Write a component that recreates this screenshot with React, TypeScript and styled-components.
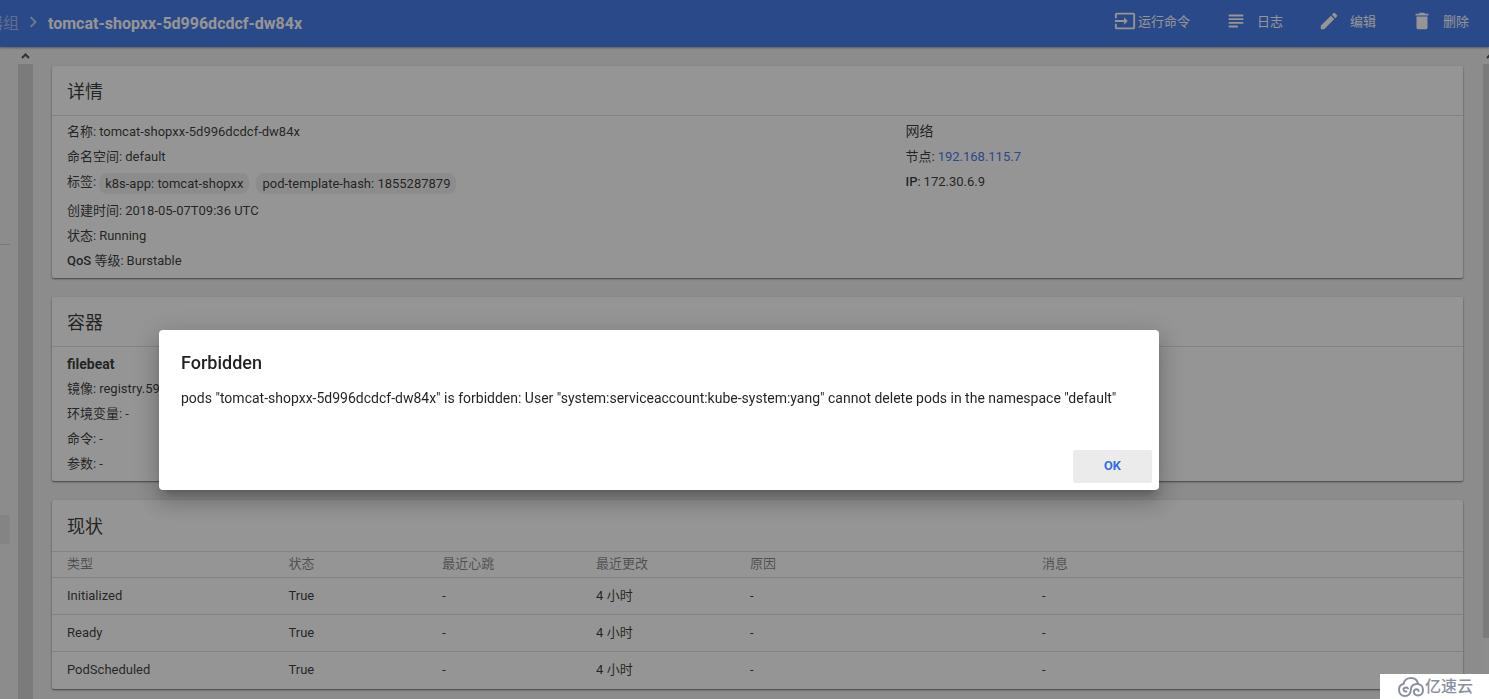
import React from "react";
import styled, { createGlobalStyle } from "styled-components";
import { MdInput, MdSubject, MdEdit, MdDelete } from "react-icons/md";

const GlobalStyle = createGlobalStyle`
  * { box-sizing: border-box; }
  body {
    margin: 0;
    background: #eee;
    color: rgba(0, 0, 0, 0.87);
    font: 13px/25px Roboto, "Noto Sans CJK SC", sans-serif;
  }
  #root { height: 100vh; overflow: hidden; }
`;

const Page = styled.div`
  display: flex;
  flex-direction: column;
  height: 100%;
`;

const TopBar = styled.header`
  display: flex;
  align-items: center;
  justify-content: space-between;
  flex: none;
  height: 47px;
  padding-right: 20px;
  background: #326de6;
  color: #fff;
  box-shadow: 0 1px 2px rgba(0, 0, 0, 0.4);
  position: relative;
`;

const Breadcrumb = styled.nav`
  display: flex;
  align-items: center;
  font-size: 16px;
`;

const ParentCrumb = styled.a`
  display: flex;
  justify-content: flex-end;
  width: 19px;
  overflow: hidden;
  white-space: nowrap;
  color: rgba(255, 255, 255, 0.5);
  text-decoration: none;
`;

const Separator = styled.svg`
  width: 8px;
  height: 12px;
  margin: 0 11px 3px 10px;
  fill: none;
  stroke: rgba(255, 255, 255, 0.6);
  stroke-width: 2;
`;

const CurrentCrumb = styled.h1`
  margin: 0;
  font-size: 16px;
  font-weight: 700;
`;

const Actions = styled.div`
  display: flex;
  gap: 35px;
  padding-bottom: 5px;
`;

const Action = styled.button<{ $gap: number }>`
  display: flex;
  align-items: center;
  gap: ${(p) => p.$gap}px;
  padding: 0;
  border: 0;
  background: none;
  color: #fff;
  font: inherit;
  svg { width: 22px; height: 22px; }
`;

const Body = styled.div`
  display: flex;
  flex: 1;
  min-height: 0;
`;

const Sidebar = styled.aside`
  width: 18px;
  padding: 197px 8px 0 0;
`;

const SideDivider = styled.hr`
  margin: 0 0 270px;
  border: 0;
  border-top: 1px solid #c8c8c8;
`;

const SideActive = styled.div`
  height: 29px;
  background: #dedede;
`;

const ScrollTrack = styled.div<{ $width: number }>`
  display: flex;
  flex-direction: column;
  flex: none;
  width: ${(p) => p.$width}px;
  overflow: hidden;
  background: #f0f0f0;
`;

const ScrollArrow = styled.svg`
  flex: none;
  width: 15px;
  height: 17px;
  fill: none;
  stroke: #404040;
  stroke-width: 2;
`;

const ScrollThumb = styled.div<{ $share: number }>`
  height: ${(p) => p.$share}%;
  background: #cdcdcd;
`;

const Main = styled.main`
  display: flex;
  flex-direction: column;
  flex: 1;
  gap: 19px;
  min-width: 0;
  padding: 19px 20px 0 19px;
`;

const Card = styled.section`
  flex: none;
  border-radius: 2px;
  background: #fff;
  box-shadow: 0 1px 2px rgba(0, 0, 0, 0.6);
`;

const CardTitle = styled.h2<{ $tall?: boolean }>`
  margin: 0;
  padding: ${(p) => (p.$tall ? "3px 15px 1px" : "2px 15px 0")};
  border-bottom: 1px solid #ddd;
  font-size: 18px;
  line-height: 47px;
  font-weight: 400;
`;

const CardBody = styled.div`
  display: grid;
  grid-template-columns: 17fr 11fr;
  padding: 3px 15px 5px;
`;

const Line = styled.div`
  display: flex;
  gap: 3px;
`;

const Label = styled.span`
  b { font-weight: 500; }
`;

const Chips = styled.span`
  display: flex;
  gap: 7px;
  padding: 4px 0;
`;

const Chip = styled.span`
  padding: 0 6px;
  border-radius: 8px;
  background: #eee;
  line-height: 21px;
`;

const GroupTitle = styled.div`
  font-size: 14px;
`;

const ContainerName = styled.h3`
  margin: 0;
  padding-top: 3px;
  font-size: 14px;
  line-height: 23px;
  font-weight: 700;
`;

const NodeLink = styled.a`
  color: #326de6;
  text-decoration: none;
`;

const Table = styled.table`
  width: 100%;
  border-collapse: collapse;
  table-layout: fixed;
  text-align: left;
`;

const Col = styled.col<{ $width?: number }>`
  width: ${(p) => (p.$width ? `${p.$width}%` : "auto")};
`;

const HeadCell = styled.th`
  height: 25px;
  padding: 0 0 2px 15px;
  color: rgba(0, 0, 0, 0.54);
  font-weight: 400;
  line-height: 23px;
`;

const Cell = styled.td`
  height: 37px;
  padding: 0 0 2px 15px;
  border-top: 1px solid #ddd;
`;

const Backdrop = styled.div`
  position: fixed;
  inset: 0;
  display: flex;
  align-items: center;
  justify-content: center;
  padding: 121px 171px 0 0;
  background: rgba(33, 33, 33, 0.48);
`;

const Dialog = styled.div`
  display: flex;
  flex-direction: column;
  width: 1000px;
  max-width: 80%;
  min-height: 160px;
  border-radius: 4px;
  background: #fff;
  box-shadow: 0 7px 8px -4px rgba(0, 0, 0, 0.2), 0 13px 19px 2px rgba(0, 0, 0, 0.14),
    0 5px 24px 4px rgba(0, 0, 0, 0.12);
`;

const DialogText = styled.div`
  flex: 1;
  padding: 20px 22px 0;
`;

const DialogTitle = styled.h2`
  margin: 0 0 12px;
  font-size: 18px;
  line-height: 25px;
  font-weight: 500;
`;

const Message = styled.p`
  margin: 0;
  font-size: 14px;
  line-height: 22px;
`;

const DialogActions = styled.div`
  display: flex;
  justify-content: flex-end;
  padding: 7px;
`;

const OkButton = styled.button`
  width: 79px;
  height: 33px;
  padding: 0 0 2px;
  border: 0;
  border-radius: 2px;
  background: #ebebeb;
  color: #326de6;
  font: 700 13px/31px Roboto, sans-serif;
`;

const Watermark = styled.div`
  position: fixed;
  right: 0;
  bottom: 0;
  display: flex;
  align-items: center;
  gap: 1px;
  height: 25px;
  padding: 0 16px 0 18px;
  background: #fff;
  color: #8b90a0;
  font-size: 16px;
  font-weight: 500;
`;

const CloudLogo = styled.svg`
  width: 26px;
  height: 20px;
  fill: none;
  stroke: #8b90a0;
  stroke-width: 2;
  stroke-linecap: round;
`;

const actions = [
  { label: "运行命令", icon: <MdInput />, gap: 2 },
  { label: "日志", icon: <MdSubject />, gap: 10 },
  { label: "编辑", icon: <MdEdit />, gap: 10 },
  { label: "删除", icon: <MdDelete />, gap: 10 },
];

const columns = [
  { name: "类型", width: 15.7 },
  { name: "状态", width: 10.9 },
  { name: "最近心跳", width: 10.9 },
  { name: "最近更改", width: 10.9 },
  { name: "原因", width: 20.7 },
  { name: "消息" },
];

const conditions = ["Initialized", "Ready", "PodScheduled"];

function Field({ label, children }: { label: React.ReactNode; children: React.ReactNode }) {
  return (
    <Line>
      <Label>{label}:</Label>
      {children}
    </Line>
  );
}

function Scrollbar({ width, share }: { width: number; share: number }) {
  return (
    <ScrollTrack $width={width}>
      <ScrollArrow viewBox="0 0 15 17">
        <path d="M4 11l3.5-3.5L11 11" />
      </ScrollArrow>
      <ScrollThumb $share={share} />
    </ScrollTrack>
  );
}

export default function App() {
  return (
    <>
      <GlobalStyle />
      <Page lang="zh-CN">
        <TopBar>
          <Breadcrumb>
            <ParentCrumb href="#pods">器组</ParentCrumb>
            <Separator viewBox="0 0 8 12">
              <path d="M1.5 1l5 5-5 5" />
            </Separator>
            <CurrentCrumb>tomcat-shopxx-5d996dcdcf-dw84x</CurrentCrumb>
          </Breadcrumb>
          <Actions>
            {actions.map((a) => (
              <Action key={a.label} $gap={a.gap}>
                {a.icon}
                {a.label}
              </Action>
            ))}
          </Actions>
        </TopBar>
        <Body>
          <Sidebar>
            <SideDivider />
            <SideActive />
          </Sidebar>
          <Scrollbar width={15} share={100} />
          <Main>
            <Card>
              <CardTitle>详情</CardTitle>
              <CardBody>
                <div>
                  <Field label="名称">tomcat-shopxx-5d996dcdcf-dw84x</Field>
                  <Field label="命名空间">default</Field>
                  <Field label="标签">
                    <Chips>
                      <Chip>k8s-app: tomcat-shopxx</Chip>
                      <Chip>pod-template-hash: 1855287879</Chip>
                    </Chips>
                  </Field>
                  <Field label="创建时间">2018-05-07T09:36 UTC</Field>
                  <Field label="状态">Running</Field>
                  <Field label={<><b>QoS</b> 等级</>}>Burstable</Field>
                </div>
                <div>
                  <GroupTitle>网络</GroupTitle>
                  <Field label="节点">
                    <NodeLink href="#node">192.168.115.7</NodeLink>
                  </Field>
                  <Field label={<b>IP</b>}>172.30.6.9</Field>
                </div>
              </CardBody>
            </Card>
            <Card>
              <CardTitle>容器</CardTitle>
              <CardBody>
                <div>
                  <ContainerName>filebeat</ContainerName>
                  <Field label="镜像">registry.59</Field>
                  <Field label="环境变量">-</Field>
                  <Field label="命令">-</Field>
                  <Field label="参数">-</Field>
                </div>
              </CardBody>
            </Card>
            <Card>
              <CardTitle $tall>现状</CardTitle>
              <Table>
                <colgroup>
                  {columns.map((c) => (
                    <Col key={c.name} $width={c.width} />
                  ))}
                </colgroup>
                <thead>
                  <tr>
                    {columns.map((c) => (
                      <HeadCell key={c.name} scope="col">{c.name}</HeadCell>
                    ))}
                  </tr>
                </thead>
                <tbody>
                  {conditions.map((type) => (
                    <tr key={type}>
                      <Cell>{type}</Cell>
                      <Cell>True</Cell>
                      <Cell>-</Cell>
                      <Cell>4 小时</Cell>
                      <Cell>-</Cell>
                      <Cell>-</Cell>
                    </tr>
                  ))}
                </tbody>
              </Table>
            </Card>
          </Main>
          <Scrollbar width={6} share={88} />
        </Body>
      </Page>
      <Backdrop>
        <Dialog role="alertdialog" aria-modal="true" aria-labelledby="dialog-title">
          <DialogText>
            <DialogTitle id="dialog-title">Forbidden</DialogTitle>
            <Message>
              pods "tomcat-shopxx-5d996dcdcf-dw84x" is forbidden: User
              "system:serviceaccount:kube-system:yang" cannot delete pods in the namespace "default"
            </Message>
          </DialogText>
          <DialogActions>
            <OkButton>OK</OkButton>
          </DialogActions>
        </Dialog>
      </Backdrop>
      <Watermark>
        <CloudLogo viewBox="0 0 26 20">
          <path d="M5.5 7C6 3 9.5 1 13 1C17 1 19.5 3.5 20 7" />
          <path d="M5.5 7C2.5 7.5 1 10 1 12.8C1 16.5 3.5 19 7 19C11 19 12.5 16.5 12.8 13C13 9 15.5 7 19 7C22.8 7 25 9.5 25 13C25 16.5 22.8 18.5 20 18.5C17 18.5 15.5 16.5 16 14C16.5 11.5 20.5 11.5 20.5 14" />
          <path d="M8.5 14.5C5 15 4.5 11 7.5 10.5C8.5 10.3 9.5 10.8 10 11.5" />
        </CloudLogo>
        亿速云
      </Watermark>
    </>
  );
}
